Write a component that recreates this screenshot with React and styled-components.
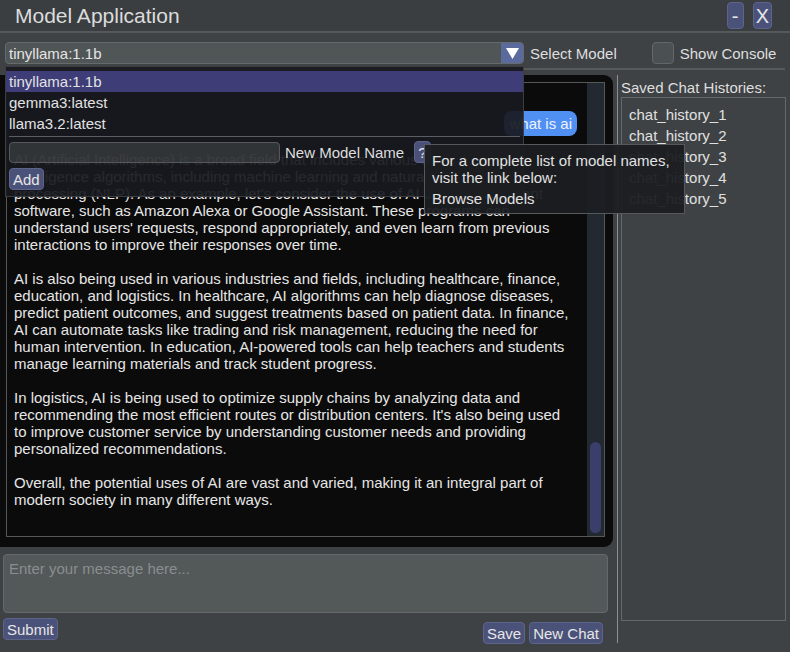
import React from 'react';
import styled, { createGlobalStyle } from 'styled-components';

const GlobalStyle = createGlobalStyle`
    html, body {
        margin: 0;
        padding: 0;
        background: #3e4245;
    }
    body {
        font-family: "Liberation Sans", Arial, sans-serif;
        color: #e4e4e4;
    }
`;

const Window = styled.div`
    position: relative;
    width: 790px;
    height: 652px;
    overflow: hidden;
    background: #3e4245;
    display: flex;
    flex-direction: column;
`;

const TitleBar = styled.header`
    height: 33px;
    box-sizing: border-box;
    display: flex;
    align-items: flex-start;
    justify-content: space-between;
    padding: 0 18px 0 15px;
    border-bottom: 2px solid #55595c;
    background: #3a3e41;
`;

const Title = styled.h1`
    margin: 4px 0 0;
    font-size: 21px;
    font-weight: 400;
    color: #dcdcdc;
`;

const WinButtons = styled.div`
    display: flex;
    gap: 9px;
    padding-top: 2px;
`;

const Button = styled.button`
    font-family: inherit;
    font-size: ${(p) => (p.$big ? '20px' : '15px')};
    color: #e6e6e6;
    background: #4b5279;
    border: 1px solid #5d648c;
    border-radius: 4px;
    height: ${(p) => (p.$big ? '27px' : '22px')};
    min-width: ${(p) => (p.$big ? '17px' : 'auto')};
    padding: 0 ${(p) => (p.$big ? '2px' : '3px')};
    margin-left: ${(p) => p.$gap || 0}px;
    line-height: 1;
    cursor: pointer;
`;

const Toolbar = styled.div`
    display: flex;
    align-items: center;
    height: 22px;
    padding: 0 5px;
    margin-top: 9px;
`;

const Combo = styled.div`
    width: 519px;
    height: 22px;
    box-sizing: border-box;
    display: flex;
    align-items: center;
    background: #505556;
    border: 1px solid #666a6c;
    border-radius: 4px;
    overflow: hidden;
`;

const ComboValue = styled.span`
    flex: 1;
    padding-left: 3px;
    font-size: 15px;
`;

const ComboArrow = styled.span`
    width: 22px;
    height: 22px;
    display: flex;
    align-items: center;
    justify-content: center;
    background: #5b6a9d;
`;

const Label = styled.span`
    font-size: 15px;
    color: #dedede;
    margin-left: ${(p) => p.$gap || 0}px;
`;

const Checkbox = styled.span`
    width: 22px;
    height: 22px;
    box-sizing: border-box;
    background: #4b5052;
    border: 1px solid #62676a;
    border-radius: 4px;
    margin-left: 35px;
`;

const Rule = styled.div`
    height: 2px;
    margin: 4px 5px 0;
    background: #55595c;
`;

const Body = styled.div`
    display: flex;
    margin-top: 5px;
`;

const LeftCol = styled.div`
    width: 613px;
    display: flex;
    flex-direction: column;
`;

const ChatFrame = styled.div`
    height: 472px;
    box-sizing: border-box;
    background: #0b0b0b;
    border-radius: 0 9px 9px 0;
    padding: 7px 8px 10px 6px;
`;

const Log = styled.div`
    height: 100%;
    box-sizing: border-box;
    border: 1px solid #555859;
    display: flex;
`;

const LogContent = styled.div`
    flex: 1;
    overflow: hidden;
    padding: 0 10px 0 7px;
`;

const BubbleRow = styled.div`
    display: flex;
    justify-content: flex-end;
    margin-top: 28px;
`;

const Bubble = styled.div`
    background: #5190f3;
    color: #eef3ff;
    font-size: 15px;
    height: 25px;
    line-height: 25px;
    padding: 0 5px;
    border-radius: 8px;
`;

const Reply = styled.div`
    margin-top: 15px;
    font-size: 15px;
    line-height: 17px;
    color: #e6e6e6;
    p {
        margin: 0 0 17px;
    }
`;

const ScrollTrack = styled.div`
    width: 17px;
    background: #232931;
    display: flex;
    flex-direction: column;
    justify-content: flex-end;
    padding: 0 3px 3px;
    box-sizing: border-box;
`;

const ScrollThumb = styled.div`
    height: 91px;
    border-radius: 6px;
    background: #3a3e6b;
`;

const Composer = styled.div`
    height: 59px;
    box-sizing: border-box;
    margin: 7px 5px 0 3px;
    background: #535859;
    border: 1px solid #65696b;
    border-radius: 4px;
    padding: 5px 5px;
    font-size: 15px;
    color: #8a8e90;
`;

const ActionRow = styled.div`
    display: flex;
    justify-content: space-between;
    align-items: flex-start;
    margin-top: 5px;
    padding: 0 10px 0 3px;
`;

const ActionGroup = styled.div`
    display: flex;
    gap: 4px;
    margin-top: 4px;
`;

const RightCol = styled.aside`
    width: 173px;
    height: 568px;
    box-sizing: border-box;
    margin-left: 4px;
    border-left: 1px solid #8c9093;
    padding-left: 3px;
    display: flex;
    flex-direction: column;
`;

const SideTitle = styled.div`
    font-size: 15px;
    color: #dedede;
    margin-top: 4px;
    height: 18px;
`;

const HistoryList = styled.ul`
    list-style: none;
    margin: 0;
    width: 165px;
    height: 524px;
    box-sizing: border-box;
    border: 1px solid #65696b;
    padding: 6px 0 0 7px;
`;

const HistoryItem = styled.li`
    font-size: 15px;
    line-height: 21px;
    color: #e0e0e0;
`;

const Popup = styled.div`
    position: absolute;
    left: 5px;
    top: 66px;
    width: 519px;
    height: 131px;
    box-sizing: border-box;
    background: rgba(24, 26, 31, 0.93);
    border: 1px solid #3a3d42;
    padding-top: 4px;
`;

const Option = styled.div`
    height: 21px;
    line-height: 21px;
    padding-left: 3px;
    font-size: 15px;
    color: #e2e2e2;
    background: ${(p) => (p.$active ? '#3e3d78' : 'transparent')};
`;

const PopupRule = styled.div`
    height: 1px;
    background: #5a5d62;
    margin: 2px 3px 0;
`;

const PopupRow = styled.div`
    display: flex;
    align-items: center;
    gap: 5px;
    padding-left: 3px;
    margin-top: ${(p) => p.$top || 0}px;
`;

const TextInput = styled.div`
    width: 271px;
    height: 21px;
    box-sizing: border-box;
    background: rgba(82, 86, 88, 0.45);
    border: 1px solid #55595c;
    border-radius: 4px;
`;

const Tooltip = styled.div`
    position: absolute;
    left: 424px;
    top: 144px;
    width: 261px;
    height: 70px;
    box-sizing: border-box;
    background: rgba(27, 29, 34, 0.95);
    border: 1px solid #55585c;
    padding: 7px 7px;
    font-size: 15px;
    color: #e2e2e2;
    line-height: 17px;
`;

const TipLink = styled.div`
    margin-top: 4px;
`;

const histories = ['chat_history_1', 'chat_history_2', 'chat_history_3', 'chat_history_4', 'chat_history_5'];
const models = ['tinyllama:1.1b', 'gemma3:latest', 'llama3.2:latest'];

const paragraphs = [
    [
        'AI (Artificial Intelligence) is a broad field that includes various artificial',
        'intelligence algorithms, including machine learning and natural language',
        "processing (NLP). As an example, let's consider the use of AI in virtual assistant",
        'software, such as Amazon Alexa or Google Assistant. These programs can',
        "understand users' requests, respond appropriately, and even learn from previous",
        'interactions to improve their responses over time.',
    ],
    [
        'AI is also being used in various industries and fields, including healthcare, finance,',
        'education, and logistics. In healthcare, AI algorithms can help diagnose diseases,',
        'predict patient outcomes, and suggest treatments based on patient data. In finance,',
        'AI can automate tasks like trading and risk management, reducing the need for',
        'human intervention. In education, AI-powered tools can help teachers and students',
        'manage learning materials and track student progress.',
    ],
    [
        'In logistics, AI is being used to optimize supply chains by analyzing data and',
        'recommending the most efficient routes or distribution centers. It\'s also being used',
        'to improve customer service by understanding customer needs and providing',
        'personalized recommendations.',
    ],
    [
        'Overall, the potential uses of AI are vast and varied, making it an integral part of',
        'modern society in many different ways.',
    ],
];

export default function App() {
    return (
        <Window>
            <GlobalStyle />
            <TitleBar>
                <Title>Model Application</Title>
                <WinButtons>
                    <Button $big>-</Button>
                    <Button $big>X</Button>
                </WinButtons>
            </TitleBar>

            <Toolbar>
                <Combo>
                    <ComboValue>tinyllama:1.1b</ComboValue>
                    <ComboArrow>
                        <svg width="13" height="11" viewBox="0 0 13 11">
                            <path d="M0 0h13L6.5 11z" fill="#ffffff" />
                        </svg>
                    </ComboArrow>
                </Combo>
                <Label $gap={6}>Select Model</Label>
                <Checkbox />
                <Label $gap={6}>Show Console</Label>
            </Toolbar>
            <Rule />

            <Body>
                <LeftCol>
                    <ChatFrame>
                        <Log>
                            <LogContent>
                                <BubbleRow>
                                    <Bubble>what is ai</Bubble>
                                </BubbleRow>
                                <Reply>
                                    {paragraphs.map((lines, i) => (
                                        <p key={i}>
                                            {lines.map((l, j) => (
                                                <React.Fragment key={j}>
                                                    {l}
                                                    {j < lines.length - 1 && <br />}
                                                </React.Fragment>
                                            ))}
                                        </p>
                                    ))}
                                </Reply>
                            </LogContent>
                            <ScrollTrack>
                                <ScrollThumb />
                            </ScrollTrack>
                        </Log>
                    </ChatFrame>
                    <Composer>Enter your message here...</Composer>
                    <ActionRow>
                        <Button>Submit</Button>
                        <ActionGroup>
                            <Button>Save</Button>
                            <Button>New Chat</Button>
                        </ActionGroup>
                    </ActionRow>
                </LeftCol>

                <RightCol>
                    <SideTitle>Saved Chat Histories:</SideTitle>
                    <HistoryList>
                        {histories.map((h) => (
                            <HistoryItem key={h}>{h}</HistoryItem>
                        ))}
                    </HistoryList>
                </RightCol>
            </Body>

            <Popup>
                {models.map((m, i) => (
                    <Option key={m} $active={i === 0}>{m}</Option>
                ))}
                <PopupRule />
                <PopupRow $top={4}>
                    <TextInput />
                    <Label>New Model Name</Label>
                    <Button $gap={5}>?</Button>
                </PopupRow>
                <PopupRow $top={5}>
                    <Button>Add</Button>
                </PopupRow>
            </Popup>

            <Tooltip>
                For a complete list of model names,
                <br />
                visit the link below:
                <TipLink>Browse Models</TipLink>
            </Tooltip>
        </Window>
    );
}
